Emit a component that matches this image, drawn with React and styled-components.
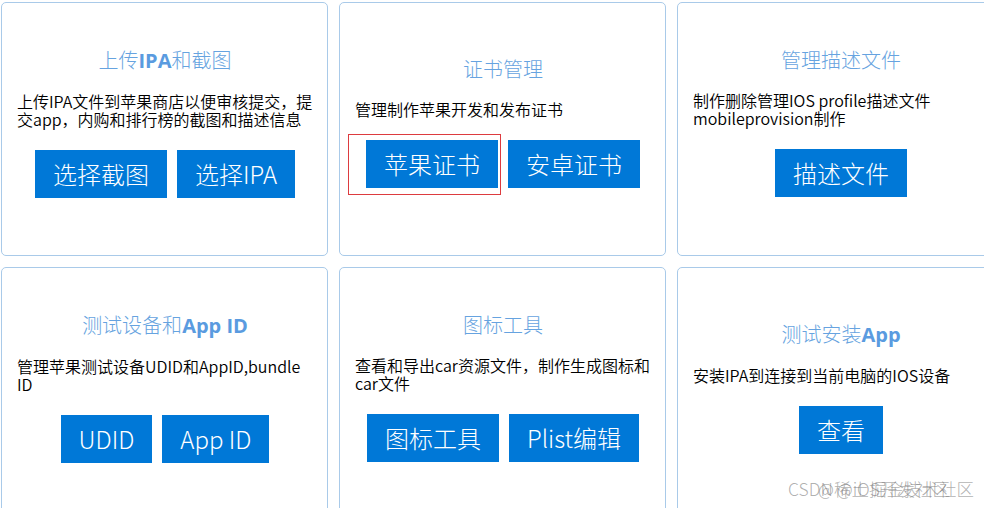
import React from 'react'
import styled, { createGlobalStyle } from 'styled-components'

const GlobalStyle = createGlobalStyle`
  html, body {
    margin: 0;
    padding: 0;
    background: #ffffff;
  }
  body {
    font-family: "Noto Sans CJK SC", "Noto Sans", sans-serif;
  }
`

const Page = styled.div`
  position: relative;
  width: 984px;
  height: 508px;
  overflow: hidden;
  background: #fff;
`

const Grid = styled.div`
  display: grid;
  grid-template-columns: repeat(3, 327px);
  grid-auto-rows: 254px;
  column-gap: 11px;
  row-gap: 11px;
  padding: 2px 0 0 1px;
`

const Card = styled.section`
  box-sizing: border-box;
  border: 1px solid #a9cae9;
  border-radius: 5px;
  display: flex;
  flex-direction: column;
  justify-content: center;
  padding: 0 14px 14px 15px;
  background: #fff;
`

const Title = styled.h2`
  margin: 0 0 18px;
  text-align: center;
  font-size: 20px;
  line-height: 26px;
  font-weight: 300;
  color: #66a3e0;
  font-family: "Noto Sans CJK SC", "Noto Sans", sans-serif;

  b {
    font-family: "Open Sans", "Noto Sans", sans-serif;
    font-weight: 700;
    color: #5a9be0;
  }
`

const Desc = styled.p`
  margin: 0 0 22px;
  font-size: 16px;
  line-height: 18px;
  font-weight: 350;
  color: #000;
  font-family: "Noto Sans CJK SC", "Noto Sans", sans-serif;
  white-space: nowrap;
`

const Actions = styled.div`
  display: flex;
  justify-content: center;
  gap: 10px;
`

const Button = styled.button`
  position: relative;
  height: 48px;
  padding: 0 18px;
  border: none;
  border-radius: 0;
  background: #0078d7;
  color: #fff;
  font-family: "Noto Sans CJK SC", "Noto Sans", sans-serif;
  font-size: 24px;
  font-weight: 300;
  line-height: 48px;
  cursor: pointer;

  ${(p) =>
    p.$marked &&
    `
    &::after {
      content: '';
      position: absolute;
      top: -6px;
      left: -18px;
      right: -3px;
      bottom: -7px;
      border: 1px solid #dd3b3f;
      pointer-events: none;
    }
  `}
`

const Watermark = styled.span`
  position: absolute;
  top: ${(p) => p.$top}px;
  left: ${(p) => p.$left}px;
  font-family: "Noto Sans CJK SC", "Noto Sans", sans-serif;
  font-size: 17.5px;
  line-height: 20px;
  font-weight: 300;
  color: rgba(110, 110, 110, 0.55);
  white-space: nowrap;
  pointer-events: none;
`

const cards = [
  {
    title: <>上传<b>IPA</b>和截图</>,
    lines: ['上传IPA文件到苹果商店以便审核提交，提', '交app，内购和排行榜的截图和描述信息'],
    buttons: ['选择截图', '选择IPA'],
  },
  {
    title: <>证书管理</>,
    lines: ['管理制作苹果开发和发布证书'],
    buttons: ['苹果证书', '安卓证书'],
    marked: 0,
  },
  {
    title: <>管理描述文件</>,
    lines: ['制作删除管理IOS profile描述文件', 'mobileprovision制作'],
    buttons: ['描述文件'],
  },
  {
    title: <>测试设备和<b>App ID</b></>,
    lines: ['管理苹果测试设备UDID和AppID,bundle', 'ID'],
    buttons: ['UDID', 'App ID'],
  },
  {
    title: <>图标工具</>,
    lines: ['查看和导出car资源文件，制作生成图标和', 'car文件'],
    buttons: ['图标工具', 'Plist编辑'],
  },
  {
    title: <>测试安装<b>App</b></>,
    lines: ['安装IPA到连接到当前电脑的IOS设备'],
    buttons: ['查看'],
  },
]

const App = () => {
  return (
    <Page>
      <GlobalStyle />
      <Grid>
        {cards.map((card, i) => (
          <Card key={i}>
            <Title>{card.title}</Title>
            <Desc>
              {card.lines.map((line, j) => (
                <React.Fragment key={j}>
                  {j > 0 && <br />}
                  {line}
                </React.Fragment>
              ))}
            </Desc>
            <Actions>
              {card.buttons.map((label, j) => (
                <Button key={label} $marked={card.marked === j}>
                  {label}
                </Button>
              ))}
            </Actions>
          </Card>
        ))}
      </Grid>
      <Watermark $top={479} $left={788}>CSDN @iOS开发社区</Watermark>
      <Watermark $top={479} $left={818}>@稀土掘金技术社区</Watermark>
    </Page>
  )
}

export default App
